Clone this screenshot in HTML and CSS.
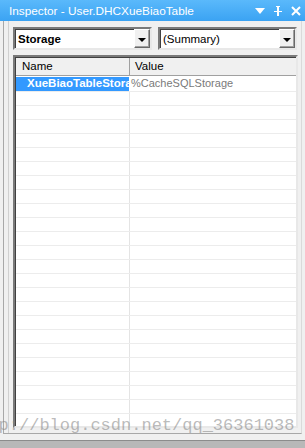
FILE: index.html
```
<!DOCTYPE html>
<html lang="en">
<head>
  <meta charset="UTF-8">
  <meta name="viewport" content="width=device-width, initial-scale=1.0">
  <title>Inspector</title>
  <link rel="stylesheet" href="styles.css">
</head>
<body>
  <div class="titlebar">
    <span class="title">Inspector - User.DHCXueBiaoTable</span>
    <div class="tools">
      <svg width="10" height="6" viewBox="0 0 10 6"><path d="M0 0h10L5 6z" fill="#fff"/></svg>
      <svg width="8" height="10" viewBox="0 0 8 10"><path d="M2 0h4v1H5v4h3v1H5v4H3V6H0V5h3V1H2z" fill="#fff"/></svg>
      <svg width="10" height="10" viewBox="0 0 10 10"><path d="M1 1l8 8M9 1l-8 8" stroke="#fff" stroke-width="2"/></svg>
    </div>
  </div>

  <div class="frame">
    <div class="inner">
      <div class="combos">
        <div class="combo">
          <span class="combo-text bold">Storage</span>
          <span class="drop"><i></i></span>
        </div>
        <div class="combo">
          <span class="combo-text">(Summary)</span>
          <span class="drop"><i></i></span>
        </div>
      </div>

      <div class="grid">
        <div class="row head">
          <div class="cell name">Name</div>
          <div class="cell value">Value</div>
        </div>
        <div class="row selected">
          <div class="cell name">XueBiaoTableStorage</div>
          <div class="cell value">%CacheSQLStorage</div>
        </div>
        <div class="rows" id="rows"></div>
      </div>
    </div>
  </div>

  <div class="bottombar">
    <div class="tools small">
      <svg width="8" height="5" viewBox="0 0 8 5"><path d="M0 0h8L4 5z" fill="#fff"/></svg>
      <svg width="6" height="8" viewBox="0 0 6 8"><path d="M1 0h4v1H4v4h2v1H0V5h2V1H1z" fill="#fff"/></svg>
      <svg width="8" height="8" viewBox="0 0 8 8"><path d="M1 1l6 6M7 1l-6 6" stroke="#fff" stroke-width="1.5"/></svg>
    </div>
  </div>

  <div class="watermark">http://blog.csdn.net/qq_36361038</div>

  <script>
    // empty rows to fill the grid
    var rows = document.getElementById('rows');
    for (var i = 0; i < 24; i++) {
      rows.innerHTML += '<div class="row"><div class="cell name"></div><div class="cell value"></div></div>';
    }
  </script>
</body>
</html>
```

FILE: styles.css
```
body {
  margin: 0;
  width: 305px;
  height: 448px;
  overflow: hidden;
  position: relative;
  background-color: #f0f0f0;
  font-family: "Liberation Sans", Arial, sans-serif;
  font-size: 11px;
}
.titlebar {
  height: 21px;
  display: flex;
  align-items: center;
  justify-content: space-between;
  padding: 0 4px 0 9px;
  background: linear-gradient(#5ab9fb, #3ba3f3);
  color: #fff;
}
.title {
  font-size: 11.8px;
  margin-top: 1px;
}
.tools {
  display: flex;
  align-items: center;
  gap: 9px;
}
.frame {
  margin: 0 3px;
  height: 413px;
  border-left: 1px solid #a8a8a8;
  border-right: 1px solid #dadada;
  border-bottom: 1px solid #a8a8a8;
  padding: 0 3px 0 4px;
  box-sizing: border-box;
}
.inner {
  height: 100%;
  box-sizing: border-box;
  border-left: 1px solid #d0d0d0;
  padding: 6px 0 0 4px;
}
.combos {
  display: flex;
  gap: 6px;
}
.combo {
  width: 139px;
  height: 23px;
  box-sizing: border-box;
  border: 2px solid;
  border-color: #7a7a7a #e8e8e8 #e8e8e8 #7a7a7a;
  box-shadow: inset 1px 1px #404040;
  background: #fff;
  display: flex;
  align-items: center;
  justify-content: space-between;
  padding: 1px 0 0 3px;
}
.combo-text {
  font-size: 11.5px;
}
.bold {
  font-weight: bold;
}
.drop {
  width: 16px;
  height: 19px;
  margin-top: -1px;
  box-sizing: border-box;
  background: #f0f0f0;
  border: 1px solid;
  border-color: #fff #696969 #696969 #fff;
  box-shadow: inset -1px -1px #a0a0a0;
  display: flex;
  align-items: center;
  justify-content: center;
}
.drop i {
  width: 0;
  height: 0;
  border-left: 4px solid transparent;
  border-right: 4px solid transparent;
  border-top: 4px solid #000;
  margin-top: 2px;
}
.grid {
  margin-top: 5px;
  height: 373px;
  overflow: hidden;
  box-sizing: border-box;
  border: 2px solid;
  border-color: #7a7a7a #e8e8e8 #e8e8e8 #7a7a7a;
  box-shadow: inset 1px 1px #404040;
  background: #fff;
  padding: 1px 0 0 1px;
}
.row {
  display: flex;
  height: 14px;
  box-sizing: border-box;
  border-bottom: 1px solid #ececec;
}
.cell {
  box-sizing: border-box;
  white-space: nowrap;
  overflow: hidden;
  line-height: 13px;
}
.cell.name {
  width: 114px;
  border-right: 1px solid #e4e4e4;
  padding-left: 6px;
}
.cell.value {
  flex: 1;
  padding-left: 2px;
}
.row.head {
  height: 18px;
  background: #f0f0f0;
  border-bottom: 1px solid #a0a0a0;
}
.row.head .cell {
  line-height: 17px;
  font-size: 11.5px;
}
.row.head .cell.name {
  border-right: 1px solid #a0a0a0;
}
.row.head .cell.value {
  padding-left: 5px;
}
.row.selected {
  height: 15px;
  margin-top: 1px;
}
.row.selected .cell.name {
  background: #3399ff;
  color: #fff;
  font-weight: bold;
  font-size: 11.5px;
  padding-left: 11px;
  border-right: 1px solid #ffffff;
}
.row.selected .cell.value {
  padding-left: 1px;
  color: #7a7a7a;
}
.bottombar {
  margin-top: 6px;
  height: 12px;
  border-top: 1px solid #8c8c8c;
  background: #b8b8b8;
  display: flex;
  justify-content: flex-end;
  align-items: flex-end;
  padding-right: 4px;
}
.tools.small {
  margin-bottom: -3px;
  gap: 8px;
}
.watermark {
  position: absolute;
  left: -32px;
  top: 416px;
  font-family: "Liberation Mono", monospace;
  font-size: 17px;
  color: rgba(130, 130, 130, 0.55);
  white-space: nowrap;
}
```
